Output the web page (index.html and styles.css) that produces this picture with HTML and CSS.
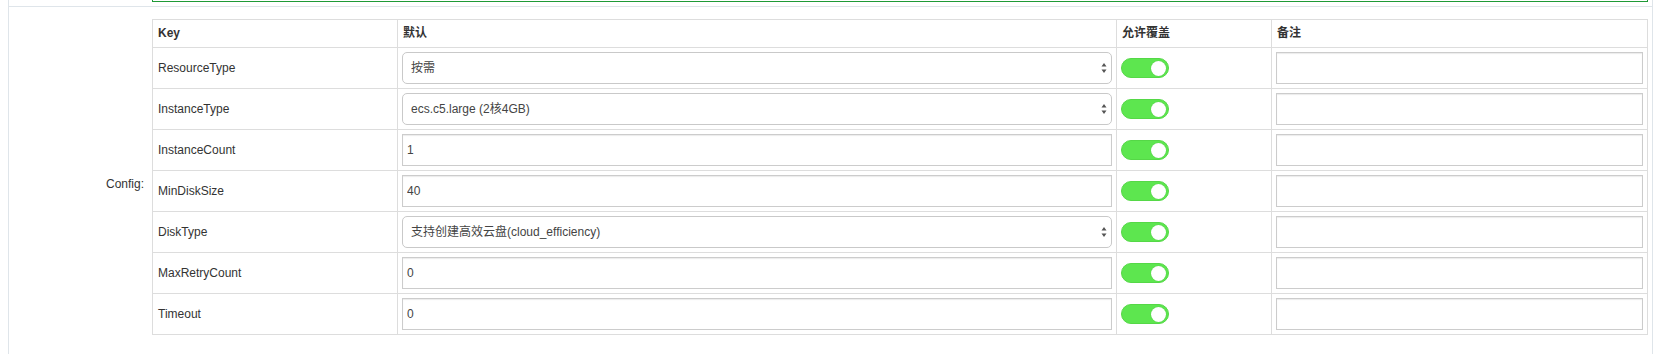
FILE: index.html
```html
<!DOCTYPE html>
<html lang="zh-CN">
<head>
    <meta charset="UTF-8">
    <title>Config</title>
    <link rel="stylesheet" href="styles.css">
</head>
<body>
    <div class="panel">
        <div class="panel-top">
            <div class="result-box"></div>
        </div>
        <div class="panel-body">
            <label class="form-label">Config:</label>
            <table class="config-table">
                <colgroup>
                    <col class="col-key">
                    <col class="col-default">
                    <col class="col-override">
                    <col>
                </colgroup>
                <thead>
                    <tr>
                        <th>Key</th>
                        <th>默认</th>
                        <th>允许覆盖</th>
                        <th>备注</th>
                    </tr>
                </thead>
                <tbody>
                    <tr>
                        <td>ResourceType</td>
                        <td class="ctl">
                            <div class="select-wrap">
                                <select><option>按需</option></select>
                                <svg class="arrows" width="6" height="12" viewBox="0 0 6 12"><path d="M3 1 L5.5 4.5 H0.5 Z M3 11 L5.5 7.5 H0.5 Z" fill="#555"/></svg>
                            </div>
                        </td>
                        <td class="ctl"><span class="switch"><span class="knob"></span></span></td>
                        <td class="ctl"><input class="text-input" type="text"></td>
                    </tr>
                    <tr>
                        <td>InstanceType</td>
                        <td class="ctl">
                            <div class="select-wrap">
                                <select><option>ecs.c5.large (2核4GB)</option></select>
                                <svg class="arrows" width="6" height="12" viewBox="0 0 6 12"><path d="M3 1 L5.5 4.5 H0.5 Z M3 11 L5.5 7.5 H0.5 Z" fill="#555"/></svg>
                            </div>
                        </td>
                        <td class="ctl"><span class="switch"><span class="knob"></span></span></td>
                        <td class="ctl"><input class="text-input" type="text"></td>
                    </tr>
                    <tr>
                        <td>InstanceCount</td>
                        <td class="ctl"><input class="text-input" type="text" value="1"></td>
                        <td class="ctl"><span class="switch"><span class="knob"></span></span></td>
                        <td class="ctl"><input class="text-input" type="text"></td>
                    </tr>
                    <tr>
                        <td>MinDiskSize</td>
                        <td class="ctl"><input class="text-input" type="text" value="40"></td>
                        <td class="ctl"><span class="switch"><span class="knob"></span></span></td>
                        <td class="ctl"><input class="text-input" type="text"></td>
                    </tr>
                    <tr>
                        <td>DiskType</td>
                        <td class="ctl">
                            <div class="select-wrap">
                                <select><option>支持创建高效云盘(cloud_efficiency)</option></select>
                                <svg class="arrows" width="6" height="12" viewBox="0 0 6 12"><path d="M3 1 L5.5 4.5 H0.5 Z M3 11 L5.5 7.5 H0.5 Z" fill="#555"/></svg>
                            </div>
                        </td>
                        <td class="ctl"><span class="switch"><span class="knob"></span></span></td>
                        <td class="ctl"><input class="text-input" type="text"></td>
                    </tr>
                    <tr>
                        <td>MaxRetryCount</td>
                        <td class="ctl"><input class="text-input" type="text" value="0"></td>
                        <td class="ctl"><span class="switch"><span class="knob"></span></span></td>
                        <td class="ctl"><input class="text-input" type="text"></td>
                    </tr>
                    <tr>
                        <td>Timeout</td>
                        <td class="ctl"><input class="text-input" type="text" value="0"></td>
                        <td class="ctl"><span class="switch"><span class="knob"></span></span></td>
                        <td class="ctl"><input class="text-input" type="text"></td>
                    </tr>
                </tbody>
            </table>
        </div>
    </div>
</body>
</html>
```

FILE: styles.css
```css
body {
    margin: 0 9px 0 8px;
    font-family: "Liberation Sans", "Noto Sans CJK SC", sans-serif;
    font-size: 12px;
    color: #333;
    background-color: #fff;
}

.panel {
    height: 354px;
    border-left: 1px solid #dfe5ea;
    border-right: 1px solid #dfe5ea;
    box-sizing: border-box;
    overflow: hidden;
}

.panel-top {
    height: 6px;
    padding: 0 4px 0 143px;
    border-bottom: 1px solid #dfe5ea;
}

.result-box {
    height: 1px;
    border: 1px solid #1f9a36;
    border-top: none;
}

.panel-body {
    display: flex;
    align-items: center;
    padding: 12px 4px 0 0;
}

.form-label {
    width: 143px;
    flex-shrink: 0;
    box-sizing: border-box;
    padding-right: 8px;
    text-align: right;
}

.config-table {
    flex: 1;
    border-collapse: collapse;
    table-layout: fixed;
    margin-bottom: 13px;
}

.col-key {
    width: 245px;
}

.col-default {
    width: 719px;
}

.col-override {
    width: 155px;
}

.config-table th,
.config-table td {
    border: 1px solid #dddddd;
    padding: 5px;
    line-height: 17px;
    text-align: left;
    vertical-align: middle;
}

.config-table th {
    font-weight: bold;
}

.config-table td.ctl {
    padding: 4px;
}

.select-wrap {
    position: relative;
}

.select-wrap select {
    -webkit-appearance: none;
    appearance: none;
    display: block;
    width: 100%;
    height: 32px;
    padding: 0 20px 0 8px;
    border: 1px solid #c9c9c9;
    border-radius: 5px;
    background-color: #fff;
    font-family: inherit;
    font-size: 12px;
    color: #444;
    box-sizing: border-box;
}

.select-wrap .arrows {
    position: absolute;
    right: 5px;
    top: 10px;
    pointer-events: none;
}

.text-input {
    display: block;
    width: 100%;
    height: 32px;
    padding: 0 4px;
    border: 1px solid #cccccc;
    border-radius: 0;
    box-shadow: inset 0 1px 1px rgba(0, 0, 0, 0.08);
    font-family: inherit;
    font-size: 12px;
    color: #444;
    box-sizing: border-box;
}

.switch {
    display: flex;
    justify-content: flex-end;
    align-items: center;
    width: 48px;
    height: 20px;
    padding: 0 2px;
    border: 1px solid #55d847;
    border-radius: 10px;
    background-color: #5de64f;
    box-sizing: border-box;
}

.knob {
    width: 15px;
    height: 15px;
    border-radius: 50%;
    background-color: #fff;
    box-shadow: 0 0 1px rgba(0, 0, 0, 0.2);
}
```
